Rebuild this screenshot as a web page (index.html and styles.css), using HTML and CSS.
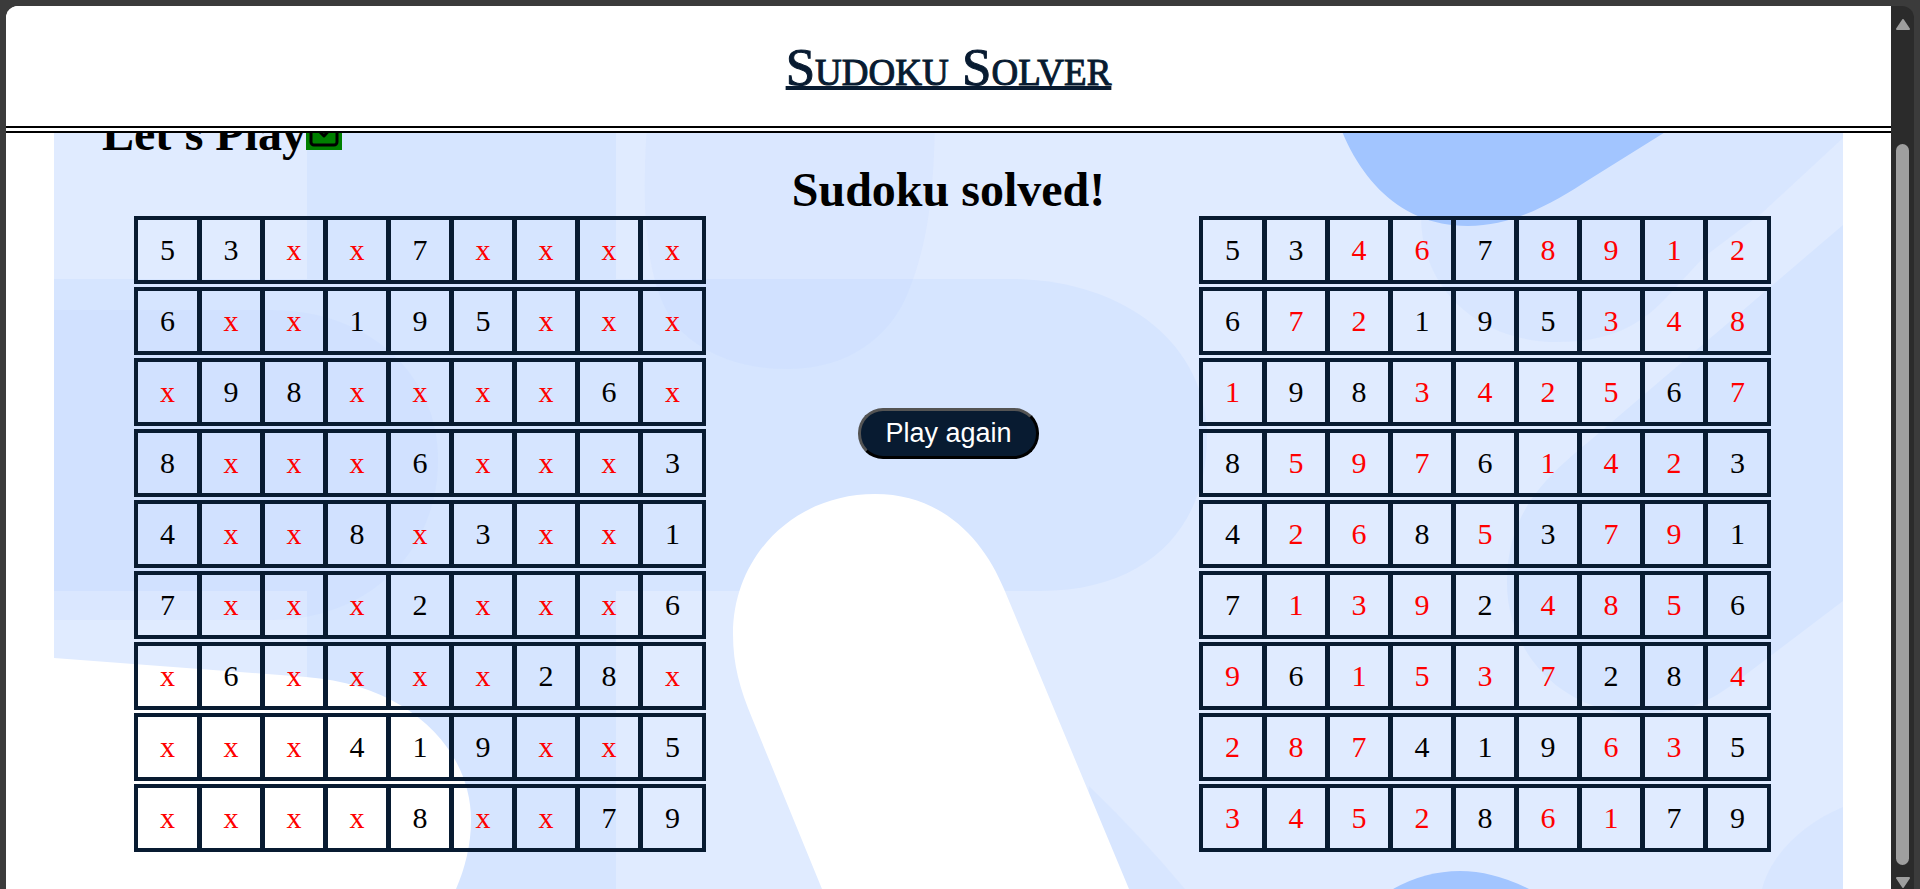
FILE: index.html
```html
<!DOCTYPE html>
<html lang="en">
<head>
<meta charset="utf-8">
<title>Sudoku Solver</title>
<link rel="stylesheet" href="styles.css">
</head>
<body>
<div class="window">
  <div class="page">
    <header class="site-header"><h1 class="site-title">Sudoku Solver</h1></header>
    <main class="game">
      <svg class="backdrop" viewBox="54 101 1789 788" preserveAspectRatio="none" aria-hidden="true">
        <rect class="base" x="54" y="101" width="1789" height="788"/>
        <path class="mid" d="M307 101H616V889H307Z"/>
        <path class="mid" d="M54 279H1010C1125 279 1207 345 1207 437C1207 525 1150 591 1040 591H54Z"/>
        <path class="veil soft" d="M54 310H270C370 310 438 375 438 460C438 550 370 620 270 620H54Z"/>
        <path class="veil soft" d="M649 101C640 200 643 290 680 330Q720 369 788 369C850 369 890 335 907 295C928 245 935 190 935 101Z"/>
        <path class="veil" d="M1421 101V216C1421 290 1480 342 1557 342C1610 342 1640 325 1664 300L1704 257L1762 213L1843 138V101Z"/>
        <path class="mid" d="M1843 225L1606 427C1560 467 1507 500 1507 583C1507 655 1565 713 1635 713C1675 713 1700 710 1740 679L1843 601Z"/>
        <path class="deep" d="M1332 101C1350 170 1395 226 1468 226C1515 226 1556 201 1590 179L1715 101Z"/>
        <path class="veil" d="M1843 807C1800 825 1770 857 1762 889H1843Z"/>
        <path class="deep" d="M1393 889Q1425 871 1460 871Q1493 871 1529 889Z"/>
        <path class="veil" d="M1089 786Q1140 835 1185 889H1080Z"/>
        <path class="white" d="M54 658L306 677C410 685 471 750 471 820C471 845 465 868 456 889H54Z"/>
        <path class="white" d="M822 889L752 718C740 689 733 665 733 634C733 555 795 494 875 494C945 494 985 543 1004 589L1129 889Z"/>
      </svg>
      <h2 class="heading play-heading">Let's Play<svg class="check-icon" viewBox="0 0 36 36" aria-hidden="true"><rect x="5" y="6" width="26" height="25" rx="3"/><path d="M11 15l7 7 9-10"/></svg></h2>
      <h2 class="heading status">Sudoku solved!</h2>
      <div class="boards">
        <table class="board" id="puzzle" aria-label="Puzzle"></table>
        <button class="again" type="button">Play again</button>
        <table class="board" id="solution" aria-label="Solution"></table>
      </div>
    </main>
  </div>
  <div class="scrollbar" aria-hidden="true">
    <svg class="arrow" viewBox="0 0 14 11"><path d="M7 1L13 10H1Z"/></svg>
    <div class="thumb"></div>
    <svg class="arrow" viewBox="0 0 14 11"><path d="M1 1H13L7 10Z"/></svg>
  </div>
</div>
<script src="script.js"></script>
</body>
</html>
```
FILE: styles.css
```css
* { box-sizing: border-box; }
body {
  margin: 0;
  background: #3b3b3b;
  font-family: "Liberation Serif", serif;
  color: #000;
}
.window {
  display: flex;
  height: 100vh;
  padding: 6px 6px 0;
  overflow: hidden;
}
.page {
  flex: 1;
  display: flex;
  flex-direction: column;
  background: #fff;
  border-top-left-radius: 12px;
  overflow: hidden;
}
.site-header {
  position: sticky;
  top: 0;
  z-index: 2;
  flex: none;
  padding: 32px 0 30px;
  background: #fff;
  border-bottom: 7px double #000;
  text-align: center;
}
.site-title {
  margin: 0;
  font-size: 53px;
  line-height: 58px;
  font-weight: 400;
  font-variant: small-caps;
  color: #081b31;
  -webkit-text-stroke: 1px #081b31;
  text-decoration: underline 4px;
  text-underline-offset: 1px;
  text-decoration-skip-ink: none;
}
.game {
  position: relative;
  z-index: 1;
  flex: 1;
  margin: -32px 48px 0;
}
.backdrop {
  position: absolute;
  inset: 0;
  z-index: -1;
  width: 100%;
  height: 100%;
}
.base { fill: #e0ebff; }
.mid { fill: #d6e5ff; }
.veil { fill: #a2c5ff; fill-opacity: 0.12; }
.soft { fill-opacity: 0.1; }
.deep { fill: #a2c5ff; }
.white { fill: #fff; }
.heading {
  margin: 0;
  font-size: 48px;
  line-height: 54px;
}
.play-heading { padding: 6px 48px 0; }
.check-icon {
  width: 36px;
  height: 36px;
  background: #008000;
  fill: none;
  stroke: #000;
  stroke-width: 3;
  stroke-linejoin: round;
  vertical-align: baseline;
}
.status {
  padding-top: 6px;
  line-height: 46px;
  text-align: center;
}
.boards {
  display: flex;
  justify-content: space-between;
  align-items: flex-start;
  padding: 0 72px;
}
.board {
  margin-left: 8px;
  border-spacing: 0 3px;
  font-size: 30px;
  line-height: 34px;
  text-align: center;
}
.board td {
  width: 63px;
  height: 68px;
  padding: 0;
  border: 4px solid #081b31;
  border-width: 4px 0 4px 5px;
}
.board td:first-child { border-left-width: 4px; }
.board td:last-child {
  width: 68px;
  border-right-width: 4px;
}
.board .open { color: #f00; }
.again {
  margin-top: 195px;
  padding: 6px 24px;
  border: 3px outset #000;
  border-radius: 25px;
  background: #081b31;
  color: #fff;
  font-family: "Liberation Sans", sans-serif;
  font-size: 27px;
  line-height: 33px;
}
.scrollbar {
  display: flex;
  flex-direction: column;
  align-items: center;
  width: 23px;
  padding: 13px 0 1px;
  background: #2b2b2b;
  border-top-right-radius: 12px;
}
.arrow {
  flex: none;
  width: 14px;
  height: 11px;
  fill: #9f9f9f;
  stroke: #9f9f9f;
  stroke-width: 2;
  stroke-linejoin: round;
}
.thumb {
  flex: 1;
  width: 13px;
  margin: 114px 0 12px;
  border-radius: 7px;
  background: #9f9f9f;
}
```
FILE: script.js
```js
const puzzle = [
  "53xx7xxxx", "6xx195xxx", "x98xxxx6x",
  "8xxx6xxx3", "4xx8x3xx1", "7xxx2xxx6",
  "x6xxxx28x", "xxx419xx5", "xxxx8xx79"
];
const solution = [
  "534678912", "672195348", "198342567",
  "859761423", "426853791", "713924856",
  "961537284", "287419635", "345286179"
];

function fill(id, rows) {
  const table = document.getElementById(id);
  rows.forEach((row, r) => {
    const tr = table.insertRow();
    [...row].forEach((value, c) => {
      const td = tr.insertCell();
      td.textContent = value;
      if (puzzle[r][c] === "x") td.className = "open";
    });
  });
}

fill("puzzle", puzzle);
fill("solution", solution);
```
